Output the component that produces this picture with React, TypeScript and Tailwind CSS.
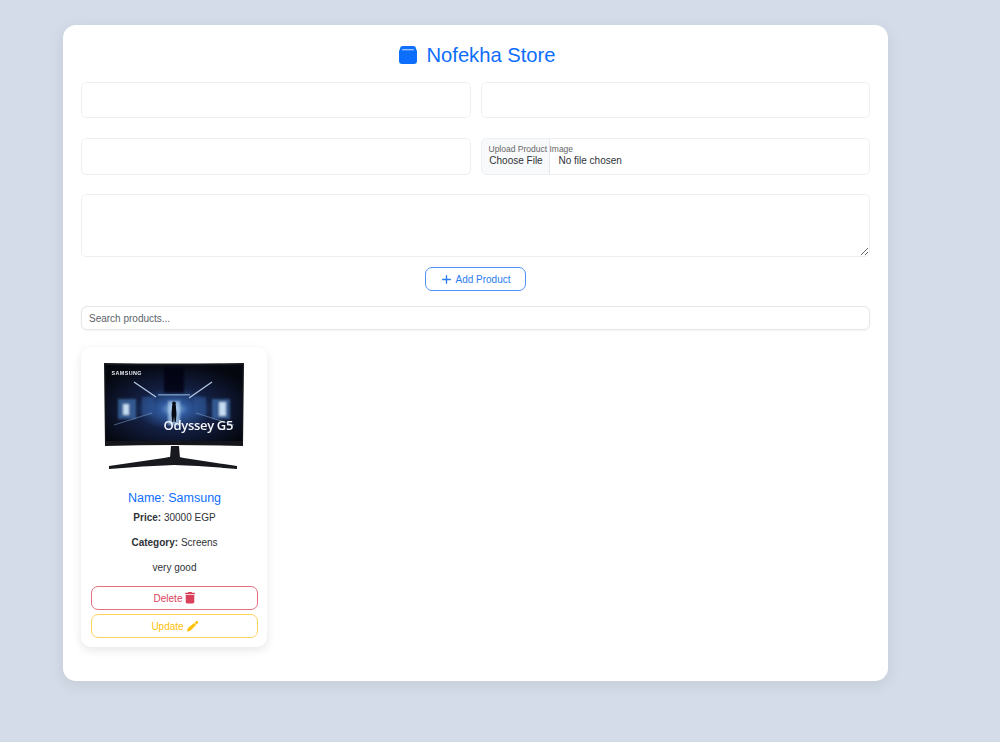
import { Plus } from 'lucide-react';

function BoxIcon() {
  return (
    <svg viewBox="0 0 18 18" className="w-[18px] h-[18px]">
      <path d="M4 0h10a3 3 0 0 1 3 3l1 2v10a3 3 0 0 1-3 3H3a3 3 0 0 1-3-3V5l1-2a3 3 0 0 1 3-3z" fill="#0d6efd" />
      <rect x="3" y="3.2" width="12" height="1" rx="0.5" fill="#cfe2ff" />
    </svg>
  );
}

function TrashIcon() {
  return (
    <svg viewBox="0 0 448 512" className="w-[10px] h-[11.5px]" fill="currentColor">
      <path d="M135 18C140 7 151 0 163 0h122c12 0 23 7 28 18l7 14h96c18 0 32 14 32 32s-14 32-32 32H32C14 96 0 82 0 64s14-32 32-32h96l7-14zM32 128h384v320c0 35-29 64-64 64H96c-35 0-64-29-64-64V128z" />
    </svg>
  );
}

function PencilIcon() {
  return (
    <svg viewBox="0 0 512 512" className="w-[11px] h-[11px]" fill="currentColor">
      <path d="M410 19c25-25 66-25 91 0c25 25 25 66 0 91l-56 56-91-91 56-56zM332 97l91 91L165 438c-8 8-18 14-29 18L27 491c-10 3-20 0-24-5-4-6-4-14-2-22l35-112c4-11 10-21 18-29L332 97z" />
    </svg>
  );
}

function Monitor() {
  return (
    <svg viewBox="0 0 140 108" className="w-[140px] h-[108px] blur-[0.3px]">
      <defs>
        <radialGradient id="glow" cx="50%" cy="58%" r="62%">
          <stop offset="0%" stopColor="#8fb8e6" />
          <stop offset="16%" stopColor="#2f5a9e" />
          <stop offset="45%" stopColor="#131f42" />
          <stop offset="100%" stopColor="#05070f" />
        </radialGradient>
        <filter id="soft" x="-20%" y="-20%" width="140%" height="140%">
          <feGaussianBlur stdDeviation="1.3" />
        </filter>
      </defs>
      <path d="M0 0 Q70 1 140 0 L139 83 Q70 81 1 83 Z" fill="#14161b" />
      <path d="M1.5 2 Q70 3 138.5 2 L138 78 Q70 78 2 78 Z" fill="url(#glow)" />
      <g filter="url(#soft)">
        <path d="M60 4h20v26H60z" fill="#04060c" opacity="0.8" />
        <path d="M14 36h18v20H14z M108 36h18v20h-18z" fill="#4a82c6" opacity="0.6" />
        <path d="M19 41h6v11h-6z M115 39h7v14h-7z" fill="#d6ebfc" opacity="0.9" />
        <path d="M38 34h12v18H38z M90 34h12v18H90z" fill="#2b5796" opacity="0.6" />
        <path d="M64 38h12v24H64z" fill="#b7d6f4" opacity="0.7" />
      </g>
      <path d="M30 19 L52 34 M108 19 L85 35" stroke="#c3dcf5" strokeWidth="1.3" opacity="0.9" />
      <path d="M10 62 L48 50 M130 62 L92 50" stroke="#8fb3de" strokeWidth="0.9" opacity="0.55" />
      <rect x="54" y="31" width="32" height="1.6" fill="#9ec3ea" opacity="0.6" />
      <path d="M68.2 42h3.6l.7 9-.7 8h-1.2l-.6-6-.6 6h-1.2l-.7-8z" fill="#060a14" />
      <circle cx="70" cy="40.5" r="1.9" fill="#060a14" />
      <text x="7.5" y="12" fontSize="5.4" fontWeight="700" letterSpacing="0.4" fill="#e8ecf2" fontFamily="'Liberation Sans', sans-serif">SAMSUNG</text>
      <text x="59.5" y="67" fontSize="13" letterSpacing="-0.3" fontWeight="600" fill="#f4f6fa" fontFamily="'Open Sans', sans-serif">Odyssey G5</text>
      <path d="M67 83h8l1 12H66z" fill="#17191e" />
      <path d="M5 103 L60 95 Q70 92 80 95 L133 103 L133 106 Q100 103 70 102 Q40 103 5 106Z" fill="#17191e" />
    </svg>
  );
}

export default function App() {
  const field = 'w-full rounded-[5px] border border-[#edf0f3] bg-white outline-none';

  return (
    <div className="min-h-[742px] bg-[#d3dce8] pt-[25px] pl-[63px] font-['Liberation_Sans',Arial,sans-serif]">
      <div className="w-[825px] h-[656px] rounded-[13px] bg-white px-[18px] pt-[18px] shadow-[0_4px_16px_rgba(0,0,0,0.08)]">
        <h1 className="flex items-center justify-center gap-[9px] h-[24px] pl-[4px] text-[20.2px] text-[#0d6efd] leading-none">
          <BoxIcon />
          Nofekha Store
        </h1>

        <div className="grid grid-cols-2 gap-x-[10px] gap-y-[20px] mt-[15px]">
          <input className={`${field} h-[36px]`} />
          <input className={`${field} h-[36px]`} />
          <input className={`${field} h-[37px]`} />
          <div className="h-[37px] rounded-[5px] border border-[#edf0f3] relative overflow-hidden">
            <div className="absolute left-0 top-0 bottom-0 w-[68px] bg-[#f8f9fa] border-r border-[#e6e9ec]" />
            <label className="absolute left-[7px] top-[5px] text-[8.5px] leading-[10px] text-[#666]">Upload Product Image</label>
            <input
              type="file"
              className="absolute left-0 top-[12px] w-full text-[10px] leading-[20px] text-[#2f3337] file:mr-[8px] file:w-[69px] file:h-[20px] file:border-0 file:bg-transparent file:text-[10px] file:text-[#2f3337]"
            />
          </div>
        </div>

        <textarea className={`${field} block h-[63px] mt-[19px]`} />

        <div className="flex justify-center mt-[10px]">
          <button className="flex items-center justify-center gap-[2px] w-[101px] h-[24px] rounded-[7px] border border-[#4f93f5] bg-white text-[10px] text-[#2a7cf0]">
            <Plus size={13} strokeWidth={2.5} />
            Add Product
          </button>
        </div>

        <input
          placeholder="Search products..."
          className="block w-full h-[24px] mt-[15px] px-[7px] rounded-[6px] border border-[#e3e6ea] text-[10px] text-[#2f3337] placeholder:text-[#5c636a] outline-none shadow-[0_1px_2px_rgba(0,0,0,0.05)]"
        />

        <div className="w-[186px] h-[300px] mt-[17px] rounded-[10px] bg-white pl-[10px] pr-[9px] pt-[16px] text-center shadow-[0_3px_10px_rgba(0,0,0,0.1)]">
          <div className="flex justify-center pr-[1px]">
            <Monitor />
          </div>
          <h2 className="mt-[19px] text-[12.5px] leading-[16px] text-[#0d6efd]">Name: Samsung</h2>
          <p className="mt-[5px] text-[10px] leading-[14px] text-[#2f3337]">
            <strong>Price:</strong> 30000 EGP
          </p>
          <p className="mt-[11px] text-[10px] leading-[14px] text-[#2f3337]">
            <strong>Category:</strong> Screens
          </p>
          <p className="mt-[11px] text-[10px] leading-[14px] text-[#2f3337]">very good</p>
          <button className="flex items-center justify-center gap-[3px] w-full h-[24px] mt-[11px] rounded-[7px] border border-[#e4707f] text-[10px] text-[#d9415a]">
            Delete <TrashIcon />
          </button>
          <button className="flex items-center justify-center gap-[3px] w-full h-[24px] mt-[4px] rounded-[7px] border border-[#ffd35c] text-[10px] text-[#ffc107]">
            Update <PencilIcon />
          </button>
        </div>
      </div>
    </div>
  );
}
